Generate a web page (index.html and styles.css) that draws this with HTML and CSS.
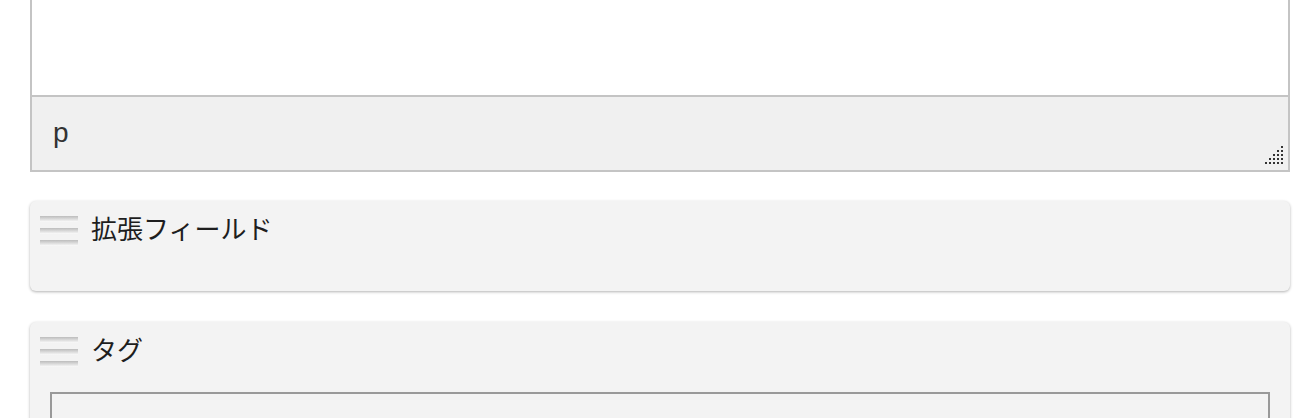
FILE: index.html
```html
<!DOCTYPE html>
<html lang="ja">
<head>
    <meta charset="UTF-8">
    <title>投稿の編集</title>
    <link rel="stylesheet" href="styles.css">
</head>
<body>
    <div class="wrap">
        <!-- Editor box, top is scrolled out of view -->
        <div class="editor">
            <div class="editor-body"></div>
            <div class="status-bar">
                <span class="path">p</span>
                <svg class="grip" width="18" height="18" viewBox="0 0 18 18">
                    <rect x="16" y="0" width="2" height="2"/>
                    <rect x="12" y="4" width="2" height="2"/><rect x="16" y="4" width="2" height="2"/>
                    <rect x="8" y="8" width="2" height="2"/><rect x="12" y="8" width="2" height="2"/><rect x="16" y="8" width="2" height="2"/>
                    <rect x="4" y="12" width="2" height="2"/><rect x="8" y="12" width="2" height="2"/><rect x="12" y="12" width="2" height="2"/><rect x="16" y="12" width="2" height="2"/>
                    <rect x="0" y="16" width="2" height="2"/><rect x="4" y="16" width="2" height="2"/><rect x="8" y="16" width="2" height="2"/><rect x="12" y="16" width="2" height="2"/><rect x="16" y="16" width="2" height="2"/>
                </svg>
            </div>
        </div>

        <div class="panel panel-fields">
            <div class="panel-head">
                <span class="handle"><i></i><i></i><i></i></span>
                <h3>拡張フィールド</h3>
            </div>
        </div>

        <div class="panel panel-tags">
            <div class="panel-head">
                <span class="handle"><i></i><i></i><i></i></span>
                <h3>タグ</h3>
            </div>
            <div class="tag-input"></div>
        </div>
    </div>
</body>
</html>
```

FILE: styles.css
```css
body {
    margin: 0;
    background: #ffffff;
    font-family: "Noto Sans CJK JP", "Liberation Sans", sans-serif;
    color: #222;
    overflow: hidden;
}
.wrap {
    width: 1260px;
    padding-left: 30px;
}

/* editor */
.editor {
    border: 2px solid #c4c4c4;
    border-top: none;
}
.editor-body {
    height: 95px;
    background: #fff;
}
.status-bar {
    height: 73px;
    background: #f0f0f0;
    border-top: 2px solid #c4c4c4;
    display: flex;
    align-items: center;
    justify-content: space-between;
    padding: 0 5px 0 21px;
}
.path {
    font-family: "Liberation Sans", Arial, sans-serif;
    font-size: 28px;
    color: #333;
    margin-top: -2px;
}
.grip {
    fill: #333;
    align-self: flex-end;
    margin-bottom: 6px;
}

/* boxes below */
.panel {
    background: #f3f3f3;
    border-radius: 6px;
    box-shadow: 0 1px 3px rgba(0, 0, 0, 0.3);
    margin-top: 29px;
}
.panel-fields {
    height: 90px;
}
.panel-tags {
    margin-top: 31px;
    padding-bottom: 40px;
}
.panel-head {
    display: flex;
    align-items: flex-start;
    padding: 15px 0 0 10px;
}
.handle {
    display: flex;
    flex-direction: column;
    gap: 6px;
    width: 38px;
}
.handle i {
    display: block;
    height: 6px;
    background: linear-gradient(#bcbcbc, #dedede 55%, #fbfbfb);
}
.panel-head h3 {
    margin: -6px 0 0 13px;
    font-size: 26px;
    font-weight: normal;
    line-height: 36px;
    color: #1e1e1e;
}
.tag-input {
    margin: 25px 20px 0 20px;
    height: 60px;
    border: 2px solid #999;
}
```
